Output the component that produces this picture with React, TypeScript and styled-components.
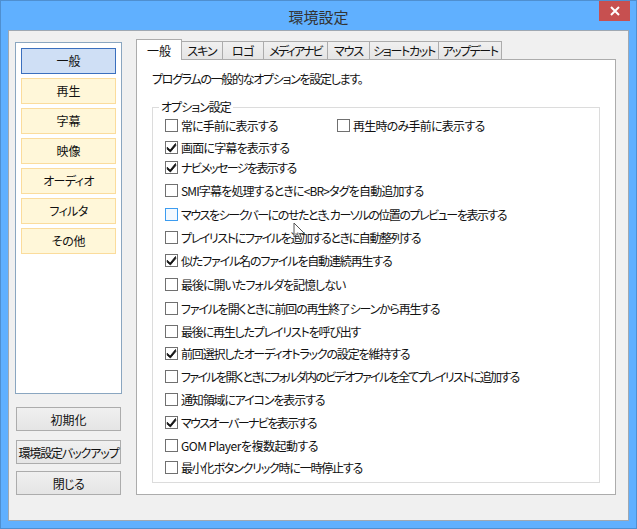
import React from 'react'
import styled, { createGlobalStyle } from 'styled-components'

const GlobalStyle = createGlobalStyle`
  html, body {
    margin: 0;
    padding: 0;
    background: #60b0ff;
  }
  * {
    box-sizing: border-box;
  }
`

const font = `'Noto Sans CJK JP', 'Noto Sans', sans-serif`

const Window = styled.div`
  position: relative;
  width: 637px;
  height: 529px;
  display: flex;
  flex-direction: column;
  background: #60b0ff;
  border: 1px solid #4f8fd0;
  font-family: ${font};
  font-feature-settings: 'palt';
  color: #111;
  overflow: hidden;
`

const TitleBar = styled.div`
  height: 29px;
  flex: none;
  padding-top: 2px;
  display: flex;
  align-items: center;
  justify-content: center;
  position: relative;
  font-size: 15px;
  color: #333;
`

const CloseButton = styled.div`
  position: absolute;
  top: 0;
  right: 6px;
  width: 31px;
  height: 20px;
  background: #c75050;
  display: flex;
  align-items: center;
  justify-content: center;
`

const Client = styled.div`
  flex: none;
  margin: 0 7px;
  height: 491px;
  background: #f0f0f0;
  border: 1px solid #9fa8b2;
  display: flex;
  padding: 11px 13px 0 6px;
  gap: 14px;
`

const Sidebar = styled.div`
  width: 107px;
  flex: none;
  display: flex;
  flex-direction: column;
`

const NavList = styled.div`
  height: 352px;
  background: #fff;
  border: 1px solid #8aa6c0;
  padding: 5px;
  display: flex;
  flex-direction: column;
  gap: 4px;
  margin-bottom: 13px;
`

const NavItem = styled.div<{ $active?: boolean; $track: number }>`
  height: 26px;
  flex: none;
  display: flex;
  align-items: center;
  justify-content: center;
  padding-bottom: 1px;
  font-size: 12px;
  letter-spacing: ${({ $track }) => $track}px;
  background: ${({ $active }) => ($active ? '#cfdff5' : '#fff7d9')};
  border: 1px solid ${({ $active }) => ($active ? '#3a6fbe' : '#fbdc9c')};
`

const ActionButton = styled.div<{ $gap: number; $track: number }>`
  width: 105px;
  height: 24px;
  margin: 0 0 ${({ $gap }) => $gap}px 1px;
  display: flex;
  align-items: center;
  justify-content: center;
  white-space: nowrap;
  font-size: 12px;
  letter-spacing: ${({ $track }) => $track}px;
  background: linear-gradient(#f0f0f0, #e5e5e5);
  border: 1px solid #acacac;
`

const Main = styled.div`
  width: 480px;
  flex: none;
  display: flex;
  flex-direction: column;
`

const TabRow = styled.div`
  height: 20px;
  flex: none;
  display: flex;
  align-items: flex-end;
  position: relative;
  z-index: 1;
  margin-top: -3px;
`

const Tab = styled.div<{ $width: number; $track: number; $active?: boolean }>`
  width: ${({ $width }) => $width}px;
  height: ${({ $active }) => ($active ? '21px' : '19px')};
  margin-bottom: -1px;
  margin-left: ${({ $active }) => ($active ? '0' : '-1px')};
  flex: none;
  display: flex;
  align-items: center;
  justify-content: center;
  white-space: nowrap;
  font-size: 12px;
  letter-spacing: ${({ $track }) => $track}px;
  background: ${({ $active }) => ($active ? '#fff' : 'linear-gradient(#f0f0f0, #e5e5e5)')};
  border: 1px solid #acacac;
  border-bottom: ${({ $active }) => ($active ? 'none' : '1px solid #acacac')};
`

const TabPanel = styled.div`
  height: 436px;
  background: #fff;
  border: 1px solid #acacac;
  padding: 9px 15px 11px;
  display: flex;
  flex-direction: column;
`

const Description = styled.div`
  font-size: 12px;
  line-height: 20px;
  height: 20px;
  margin-bottom: 18px;
  letter-spacing: -1.3px;
`

const GroupBox = styled.div`
  position: relative;
  height: 376px;
  border: 1px solid #dcdcdc;
  padding: 8px 12px 0;
  display: flex;
  flex-direction: column;
`

const GroupLabel = styled.div`
  position: absolute;
  top: -9px;
  left: 6px;
  padding: 0 2px;
  background: #fff;
  font-size: 12px;
  line-height: 16px;
  letter-spacing: -1px;
`

const Row = styled.div<{ $top?: number }>`
  display: flex;
  height: 19px;
  flex: none;
  margin-top: ${({ $top }) => $top ?? 0}px;
`

const Option = styled.div<{ $width?: number; $track: number }>`
  display: flex;
  align-items: center;
  gap: 3px;
  font-size: 12px;
  white-space: nowrap;
  letter-spacing: ${({ $track }) => $track}px;
  ${({ $width }) => ($width ? `width: ${$width}px;` : '')}
`

const Box = styled.div<{ $hover?: boolean }>`
  width: 13px;
  height: 13px;
  flex: none;
  display: flex;
  align-items: center;
  justify-content: center;
  background: ${({ $hover }) => ($hover ? '#f3f9ff' : '#fff')};
  border: 1px solid ${({ $hover }) => ($hover ? '#3c9cf0' : '#707070')};
`

const Pointer = styled.svg`
  position: absolute;
  left: 292px;
  top: 221px;
  pointer-events: none;
`

function CheckMark() {
  return (
    <svg width="11" height="11" viewBox="0 0 11 11">
      <path d="M1.2 5.2 L4.2 8 L9.5 1.5 L9.8 3.6 L4.4 10 L1.2 7.2 Z" fill="#111" stroke="#111" strokeWidth="0.8" />
    </svg>
  )
}

function CheckOption({
  label,
  checked,
  hover,
  width,
  track,
}: {
  label: string
  checked?: boolean
  hover?: boolean
  width?: number
  track: number
}) {
  return (
    <Option $width={width} $track={track}>
      <Box $hover={hover}>{checked && <CheckMark />}</Box>
      {label}
    </Option>
  )
}

const navItems: [string, number][] = [
  ['一般', 0],
  ['再生', 0],
  ['字幕', 0],
  ['映像', 0],
  ['オーディオ', -0.6],
  ['フィルタ', -0.6],
  ['その他', -0.3],
]

const tabs: [string, number, number][] = [
  ['スキン', 42, -1],
  ['ロゴ', 42, -0.5],
  ['メディアナビ', 65, -1.8],
  ['マウス', 43, -1],
  ['ショートカット', 70, -1.3],
  ['アップデート', 64, -1.5],
]

const options: { label: string; track: number; top: number; checked?: boolean; hover?: boolean }[] = [
  { label: '画面に字幕を表示する', track: -0.8, top: 3, checked: true },
  { label: 'ナビメッセージを表示する', track: -1.6, top: 1, checked: true },
  { label: 'SMI字幕を処理するときに<BR>タグを自動追加する', track: -0.85, top: 4 },
  { label: 'マウスをシークバーにのせたとき、カーソルの位置のプレビューを表示する', track: -1.45, top: 5, hover: true },
  { label: 'プレイリストにファイルを追加するときに自動整列する', track: -1.4, top: 4 },
  { label: '似たファイル名のファイルを自動連続再生する', track: -1.15, top: 4, checked: true },
  { label: '最後に開いたフォルダを記憶しない', track: -1, top: 5 },
  { label: 'ファイルを開くときに前回の再生終了シーンから再生する', track: -1.2, top: 5 },
  { label: '最後に再生したプレイリストを呼び出す', track: -1.2, top: 4 },
  { label: '前回選択したオーディオトラックの設定を維持する', track: -1.17, top: 3, checked: true },
  { label: 'ファイルを開くときにフォルダ内のビデオファイルを全てプレイリストに追加する', track: -1.65, top: 4 },
  { label: '通知領域にアイコンを表示する', track: -1.15, top: 4 },
  { label: 'マウスオーバーナビを表示する', track: -1.6, top: 4, checked: true },
  { label: 'GOM Playerを複数起動する', track: -0.5, top: 4 },
  { label: '最小化ボタンクリック時に一時停止する', track: -1.2, top: 3 },
]

export default function App() {
  return (
    <>
      <GlobalStyle />
      <Window>
        <TitleBar>
          環境設定
          <CloseButton>
            <svg width="10" height="10" viewBox="0 0 10 10">
              <path d="M1 1 L9 9 M9 1 L1 9" stroke="#fff" strokeWidth="2" />
            </svg>
          </CloseButton>
        </TitleBar>
        <Client>
          <Sidebar>
            <NavList>
              {navItems.map(([item, track], i) => (
                <NavItem key={item} $active={i === 0} $track={track}>
                  {item}
                </NavItem>
              ))}
            </NavList>
            <ActionButton $gap={9} $track={0}>
              初期化
            </ActionButton>
            <ActionButton $gap={7} $track={-1.1}>
              環境設定バックアップ
            </ActionButton>
            <ActionButton $gap={0} $track={-0.5}>
              閉じる
            </ActionButton>
          </Sidebar>
          <Main>
            <TabRow>
              <Tab $width={46} $track={0} $active>
                一般
              </Tab>
              {tabs.map(([label, width, track]) => (
                <Tab key={label} $width={width} $track={track}>
                  {label}
                </Tab>
              ))}
            </TabRow>
            <TabPanel>
              <Description>プログラムの一般的なオプションを設定します。</Description>
              <GroupBox>
                <GroupLabel>オプション設定</GroupLabel>
                <Row>
                  <CheckOption label="常に手前に表示する" width={172} track={-0.9} />
                  <CheckOption label="再生時のみ手前に表示する" track={-0.75} />
                </Row>
                {options.map(({ top, ...option }) => (
                  <Row key={option.label} $top={top}>
                    <CheckOption {...option} />
                  </Row>
                ))}
              </GroupBox>
            </TabPanel>
          </Main>
        </Client>
        <Pointer width="14" height="20" viewBox="0 0 14 20">
          <path d="M1 1 L1 15 L4.5 12 L7 18 L9 17 L6.5 11.5 L11.5 11.5 Z" fill="#fff" fillOpacity="0.6" stroke="#555" strokeWidth="1" />
        </Pointer>
      </Window>
    </>
  )
}
